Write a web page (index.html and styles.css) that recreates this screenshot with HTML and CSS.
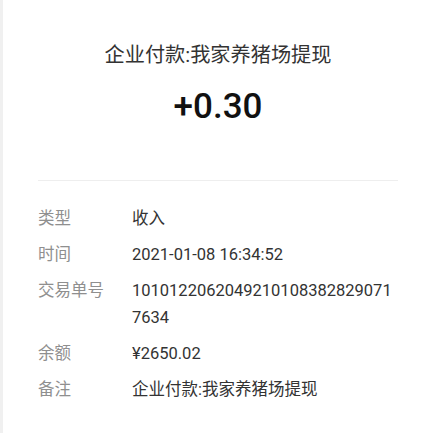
FILE: index.html
```html
<!DOCTYPE html>
<html lang="zh-CN">

<head>
    <meta charset="UTF-8">
    <meta name="viewport" content="width=device-width, initial-scale=1.0">
    <title>账单详情</title>
    <link rel="stylesheet" href="styles.css">
</head>

<body>
    <div id="detail">
        <div class="detail_head">
            <p class="detail_title">企业付款:我家养猪场提现</p>
            <p class="detail_amount">+0.30</p>
        </div>

        <ul class="detail_list">
            <li>
                <span class="label">类型</span>
                <span class="value">收入</span>
            </li>
            <li>
                <span class="label">时间</span>
                <span class="value">2021-01-08 16:34:52</span>
            </li>
            <li>
                <span class="label">交易单号</span>
                <span class="value">10101220620492101083828290717634</span>
            </li>
            <li>
                <span class="label">余额</span>
                <span class="value">¥2650.02</span>
            </li>
            <li>
                <span class="label">备注</span>
                <span class="value">企业付款:我家养猪场提现</span>
            </li>
        </ul>
    </div>
</body>

</html>
```

FILE: styles.css
```css
* {
    margin: 0px;
    padding: 0px;
}

body {
    background-color: #fff;
    font-family: "Roboto", "Noto Sans CJK SC", sans-serif;
}
/*
 * 整体
 */

#detail {
    min-height: 433px;
    border-left: 3px solid #f0f0f0;
    padding: 0 31px 0 35px;
}
/**
 * 头部 标题 + 金额
 */

.detail_head {
    padding: 41px 0 51px;
    border-bottom: 1px solid #eeeeee;
    text-align: center;
}

.detail_title {
    font-size: 20.2px;
    line-height: 28px;
    color: #333;
}

.detail_amount {
    margin-top: 16px;
    font-size: 35px;
    line-height: 44px;
    font-weight: 500;
    color: #111;
}
/**
 * 明细列表
 */

.detail_list {
    list-style: none;
    padding-top: 24px;
}

.detail_list li {
    display: flex;
    margin-bottom: 9px;
    font-size: 16.5px;
    line-height: 27px;
}

.detail_list .label {
    width: 94px;
    flex-shrink: 0;
    color: #8f8f8f;
}

.detail_list .value {
    flex: 1;
    color: #333;
    word-break: break-all;
}
```
